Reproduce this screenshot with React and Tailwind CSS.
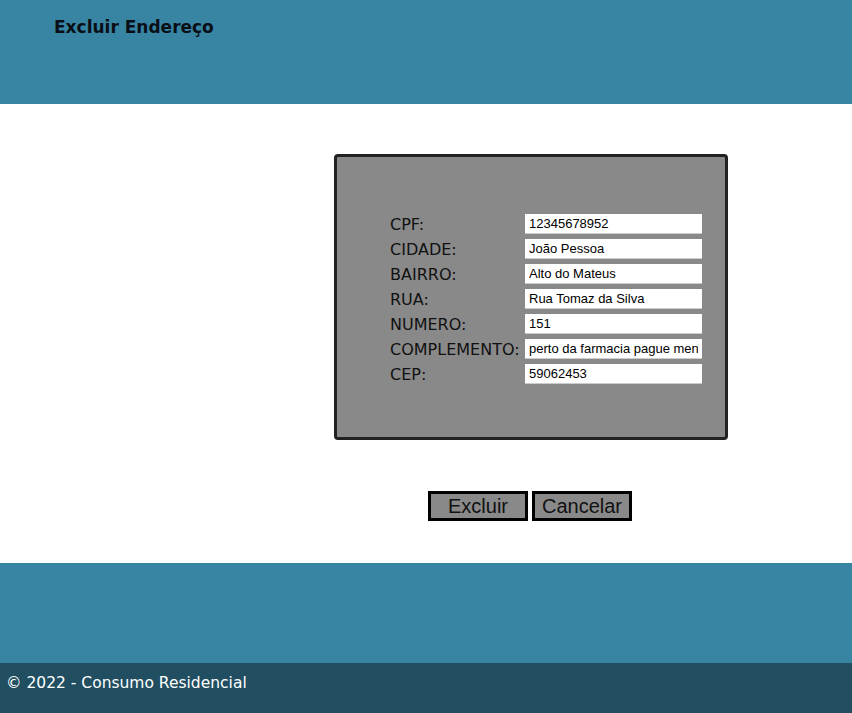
import React from 'react';

const fields = [
  { label: 'CPF:', value: '12345678952' },
  { label: 'CIDADE:', value: 'João Pessoa' },
  { label: 'BAIRRO:', value: 'Alto do Mateus' },
  { label: 'RUA:', value: 'Rua Tomaz da Silva' },
  { label: 'NUMERO:', value: '151' },
  { label: 'COMPLEMENTO:', value: 'perto da farmacia pague menos' },
  { label: 'CEP:', value: '59062453' },
];

const App = () => {
  return (
    <div className="min-h-[713px] flex flex-col font-['DejaVu_Sans',sans-serif]">
      <header className="h-[104px] bg-[#3784a3] pl-[54px] pt-[15px]">
        <h1 className="text-[17px] font-bold text-[#0a0f16] leading-[24px]">Excluir Endereço</h1>
      </header>

      <main className="h-[459px] bg-white pt-[50px] pl-[334px]">
        <div className="w-[394px] h-[286px] bg-[#898989] border-[3px] border-[#222] rounded-[4px] pt-[57px] pl-[53px]">
          <div className="flex flex-col gap-[5px]">
            {fields.map((f) => (
              <div key={f.label} className="flex items-center h-[20px]">
                <span className="w-[135px] text-[16px] leading-[20px] pt-[2px] text-[#111] whitespace-nowrap">{f.label}</span>
                <input
                  readOnly
                  value={f.value}
                  className="w-[177px] h-[20px] bg-white px-[4px] text-[13px] text-black font-['Liberation_Sans',Arial,sans-serif] outline-none border-b border-[#ccc]"
                />
              </div>
            ))}
          </div>
        </div>
        <div className="flex gap-[4px] ml-[94px] mt-[51px]">
          <button className="w-[100px] h-[30px] bg-[#898989] border-[3px] border-black text-[20px] leading-none text-[#111] font-['Liberation_Sans',Arial,sans-serif]">
            Excluir
          </button>
          <button className="w-[100px] h-[30px] bg-[#898989] border-[3px] border-black text-[20px] leading-none text-[#111] font-['Liberation_Sans',Arial,sans-serif]">
            Cancelar
          </button>
        </div>
      </main>

      <div className="h-[100px] bg-[#3784a3]" />

      <footer className="h-[50px] bg-[#214f61] pl-[6px] pt-[8px]">
        <p className="text-[15.5px] text-white leading-[24px]">© 2022 - Consumo Residencial</p>
      </footer>
    </div>
  );
};

export default App;
